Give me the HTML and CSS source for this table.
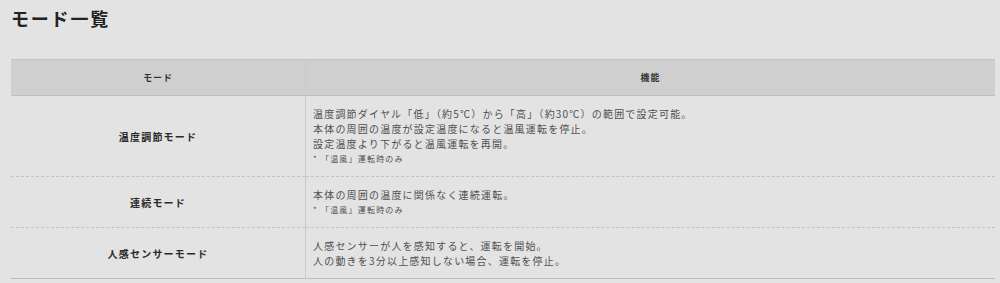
FILE: index.html
```html
<!DOCTYPE html>
<html lang="ja">
<head>
<meta charset="utf-8">
<title>モード一覧</title>
<link rel="stylesheet" href="styles.css">
</head>
<body>
<div class="page">
  <h1 class="title">モード一覧</h1>
  <table class="modes">
    <thead>
      <tr>
        <th class="col-mode">モード</th>
        <th class="col-func">機能</th>
      </tr>
    </thead>
    <tbody>
      <tr>
        <th class="mode-name">温度調節モード</th>
        <td class="func">
          <p>温度調節ダイヤル「低」（約5℃）から「高」（約30℃）の範囲で設定可能。</p>
          <p>本体の周囲の温度が設定温度になると温風運転を停止。</p>
          <p>設定温度より下がると温風運転を再開。</p>
          <p class="note">* 「温風」運転時のみ</p>
        </td>
      </tr>
      <tr>
        <th class="mode-name">連続モード</th>
        <td class="func">
          <p>本体の周囲の温度に関係なく連続運転。</p>
          <p class="note">* 「温風」運転時のみ</p>
        </td>
      </tr>
      <tr>
        <th class="mode-name">人感センサーモード</th>
        <td class="func">
          <p>人感センサーが人を感知すると、運転を開始。</p>
          <p>人の動きを3分以上感知しない場合、運転を停止。</p>
        </td>
      </tr>
    </tbody>
  </table>
</div>
</body>
</html>
```
FILE: styles.css
```css
html, body {
  margin: 0;
  padding: 0;
  background: #e3e3e3;
}

body {
  font-family: "Noto Sans CJK JP", "Noto Sans", sans-serif;
  color: #444;
}

.page {
  padding: 5px 5px 0 11px;
}

.title {
  margin: 0 0 27px 0;
  font-size: 18px;
  line-height: 27px;
  font-weight: bold;
  letter-spacing: 0.1em;
  color: #222;
}

.modes {
  width: 984px;
  border-collapse: collapse;
  table-layout: fixed;
  letter-spacing: 0.075em;
}

.modes thead th {
  background: #cfcfcf;
  border-top: 1px solid #c4c4c4;
  border-bottom: 1px solid #c0c0c0;
  height: 35px;
  padding: 0;
  font-size: 9px;
  font-weight: bold;
  letter-spacing: 0.1em;
  color: #333;
  text-align: center;
  vertical-align: middle;
}

.col-mode {
  width: 294px;
}

.col-mode, .mode-name {
  border-right: 1px solid #cbcbcb;
}

.modes tbody tr {
  border-bottom: 1px dashed #c2c2c2;
}

.modes tbody tr:last-child {
  border-bottom: 1px solid #bdbdbd;
}

.mode-name {
  font-size: 10px;
  font-weight: bold;
  color: #2a2a2a;
  text-align: center;
  vertical-align: middle;
  padding: 0;
}

.func {
  padding: 10px 7px;
  font-size: 10px;
  line-height: 15px;
  color: #505050;
}

.func p {
  margin: 0;
}

.func .note {
  font-size: 8px;
  line-height: 15px;
}
```
